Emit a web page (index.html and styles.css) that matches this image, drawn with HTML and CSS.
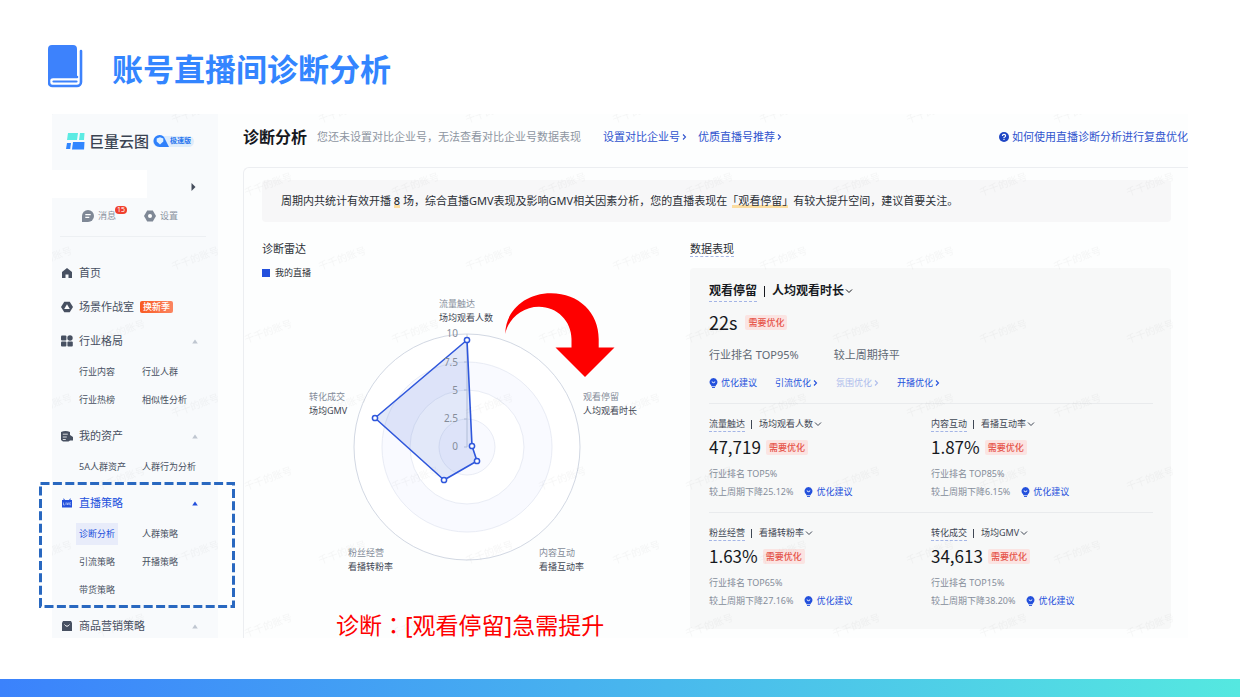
FILE: index.html
```html
<!DOCTYPE html>
<html lang="zh-CN">
<head>
<meta charset="utf-8">
<meta name="viewport" content="width=device-width, initial-scale=1">
<title>账号直播间诊断分析</title>
<link rel="stylesheet" href="styles.css">
</head>
<body>
<svg class="defs" width="0" height="0" aria-hidden="true">
  <symbol id="bulb" viewBox="0 0 8 10"><path d="M4 0a4 4 0 0 0-2.300 7.200V8.200h4.600V7.200A4 4 0 0 0 4 0z" fill="#2350dc"/><path d="M2.300 3.800q1.700 1.800 3.400 0" fill="none" stroke="#fff" stroke-width="1"/><path d="M2.500 9.400h3" stroke="#2350dc" stroke-width="1"/></symbol>
  <symbol id="down" viewBox="0 0 8 8"><path d="M1 2.500l3 3 3-3" fill="none" stroke="currentColor" stroke-width="1"/></symbol>
  <symbol id="right" viewBox="0 0 5 8"><path d="M1 1.500l2.500 2.500L1 6.500" fill="none" stroke="currentColor" stroke-width="1.100"/></symbol>
  <symbol id="fold" viewBox="0 0 6 5"><path d="M3 .5L5.800 4.500H.2z" fill="currentColor"/></symbol>
</svg>

<header class="slide-head">
  <svg class="book" viewBox="0 0 35 43" aria-hidden="true">
    <path d="M4 0h21a4 4 0 0 1 4 4v28H5q-3 0-5 2V4a4 4 0 0 1 4-4z" fill="#3d82fc"/>
    <path d="M33 6v31a4 4 0 0 1-4 4H4.500A3.500 3.500 0 0 1 1 37.500V35q0-3 4-3h24" fill="none" stroke="#3d82fc" stroke-width="2.600" stroke-linecap="round"/>
    <path d="M5.500 36.500h23" stroke="#3d82fc" stroke-width="2.200" stroke-linecap="round"/>
  </svg>
  <h1 class="slide-title">账号直播间诊断分析</h1>
</header>

<section class="board">
  <div class="screen">
    <aside class="sidebar">
      <div class="brand">
        <svg class="brand-mark" viewBox="0 0 19 17" aria-hidden="true">
          <path d="M2 0h10l-1 7H1z" fill="#5cebe3"/><path d="M14 0h4.500l-.5 7h-5z" fill="#5cebe3"/>
          <path d="M1 10h4l-.8 6H0z" fill="#3186ff"/><path d="M7 9h11.500l-.5 7.500H6z" fill="#3186ff"/>
        </svg>
        <span class="brand-name">巨量云图</span>
        <span class="edition">
          <svg class="edition-mark" viewBox="0 0 17 12" aria-hidden="true"><path d="M6.500 0a6 6 0 0 0 0 12H16L12 4A6 6 0 0 0 6.500 0z" fill="#2f80fb"/><path d="M7 2.200l3.300 1.300V6.500L7 9.500 3.700 6.500V3.500z" fill="#dff0ff"/></svg>
          极速版
        </span>
      </div>
      <div class="account">
        <div class="account-name"></div>
        <svg class="account-arrow" viewBox="0 0 5 8" aria-hidden="true"><path d="M.5 0L4.500 4 .5 8z" fill="#454d5c"/></svg>
      </div>
      <div class="tools">
        <a class="tool" href="#msg">
          <svg class="tool-icon" viewBox="0 0 12 12" aria-hidden="true"><path d="M6 0a6 6 0 1 1 0 12H0V6a6 6 0 0 1 6-6z" fill="#7f8896"/><path d="M3.300 4.600h5.400M3.300 7.400h4" stroke="#fff" stroke-width="1.200"/></svg>
          消息<span class="count">15</span>
        </a>
        <a class="tool" href="#set">
          <svg class="tool-icon" viewBox="0 0 12 12" aria-hidden="true"><path d="M3.200.6h5.600L12 6l-3.200 5.400H3.200L0 6z" fill="#7f8896"/><circle cx="6" cy="6" r="2" fill="#fff"/></svg>
          设置
        </a>
      </div>
      <nav class="menu">
        <a class="menu-head" href="#home">
          <svg class="menu-icon" viewBox="0 0 12 12" aria-hidden="true"><path d="M6 1l5 4v6H7.500V7.500h-3V11H1V5z" fill="#475061"/></svg>首页</a>
        <a class="menu-head" href="#war">
          <svg class="menu-icon" viewBox="0 0 12 12" aria-hidden="true"><path d="M3.300.8h5.400L12 6l-3.300 5.200H3.300L0 6z" fill="#475061"/><path d="M6 3.200L8.800 8H3.200z" fill="#fff"/></svg>场景作战室<span class="season">换新季</span></a>
        <div class="menu-group">
          <a class="menu-head" href="#ind">
            <svg class="menu-icon" viewBox="0 0 12 12" aria-hidden="true"><g fill="#475061"><rect x="0" y="0.500" width="5.400" height="5" rx="1"/><circle cx="9" cy="3" r="2.700"/><rect x="0" y="6.500" width="5.400" height="5" rx="1"/><rect x="6.400" y="6.500" width="5.400" height="5" rx="1"/></g></svg>行业格局
            <svg class="fold" aria-hidden="true"><use href="#fold"/></svg></a>
          <div class="submenu"><a href="#a">行业内容</a><a href="#b">行业人群</a><a href="#c">行业热榜</a><a href="#d">相似性分析</a></div>
        </div>
        <div class="menu-group">
          <a class="menu-head" href="#asset">
            <svg class="menu-icon" viewBox="0 0 12 12" aria-hidden="true"><path d="M0 2Q4.500 0 9 2V5l3 2v3.500H9L7.500 11.500H2L0 10z" fill="#475061"/><path d="M1.800 4.200h5M1.800 7h4M1.800 9.500h3" stroke="#fff" stroke-width=".8"/></svg>我的资产
            <svg class="fold" aria-hidden="true"><use href="#fold"/></svg></a>
          <div class="submenu"><a href="#e">5A人群资产</a><a href="#f">人群行为分析</a></div>
        </div>
        <div class="menu-group">
          <a class="menu-head is-open" href="#live">
            <svg class="menu-icon" viewBox="0 0 12 12" aria-hidden="true"><path d="M2.500 1l1.500 2h4l1.500-2v2H11v7.500H1V3h1.500z" fill="#2350dc"/><path d="M2.500 5.500v2.500h1.300M5 5.500V8M6 5.500l.8 2.500.8-2.500M10 5.800H8.700v2H10" fill="none" stroke="#dfe7ff" stroke-width=".6"/></svg>直播策略
            <svg class="fold" aria-hidden="true"><use href="#fold"/></svg></a>
          <div class="submenu"><a class="is-current" href="#g">诊断分析</a><a href="#h">人群策略</a><a href="#i">引流策略</a><a href="#j">开播策略</a><a href="#k">带货策略</a></div>
        </div>
        <a class="menu-head" href="#goods">
          <svg class="menu-icon" viewBox="0 0 12 12" aria-hidden="true"><path d="M2 1h8l1 2v8H1V3z" fill="#475061"/><path d="M3.500 4.500Q6 8 8.500 4.500" fill="none" stroke="#fff" stroke-width="1"/></svg>商品营销策略
          <svg class="fold" aria-hidden="true"><use href="#fold"/></svg></a>
      </nav>
    </aside>

    <main class="main">
      <div class="page-head">
        <h2 class="page-title">诊断分析</h2>
        <span class="page-hint">您还未设置对比企业号，无法查看对比企业号数据表现</span>
        <a class="link" href="#set-rival">设置对比企业号<svg class="go" aria-hidden="true"><use href="#right"/></svg></a>
        <a class="link" href="#top-live">优质直播号推荐<svg class="go" aria-hidden="true"><use href="#right"/></svg></a>
        <a class="link help" href="#help"><svg class="help-icon" viewBox="0 0 10 10" aria-hidden="true"><circle cx="5" cy="5" r="5" fill="#1f46c4"/><path d="M3.400 4Q3.400 2.400 5 2.400T6.600 3.900Q6.600 4.700 5 5.400v.8M5 7v1.100" fill="none" stroke="#fff" stroke-width="1.100"/></svg>如何使用直播诊断分析进行复盘优化</a>
      </div>

      <div class="card">
        <p class="banner">周期内共统计有效开播 <b class="mark">8</b> 场，综合直播GMV表现及影响GMV相关因素分析，您的直播表现在<span class="mark mark-quote">「观看停留」</span>有较大提升空间，建议首要关注。</p>
        <div class="columns">
          <section class="radar">
            <h3 class="section-title">诊断雷达</h3>
            <p class="legend"><i class="legend-key"></i>我的直播</p>
            <svg class="radar-chart" viewBox="0 0 400 300" role="img" aria-label="诊断雷达图">
              <g stroke="#e9ecf5">
                <circle cx="205" cy="157" r="113" fill="#fff" stroke="#d2d8e3"/>
                <circle cx="205" cy="157" r="85" fill="#f9faff"/>
                <circle cx="205" cy="157" r="57" fill="#fff"/>
                <circle cx="205" cy="157" r="28" fill="#f9faff"/>
              </g>
              <path d="M205 44v113M202 72h3M202 100h3M202 129h3M202 157h3" stroke="#c6ccd8" fill="none"/>
              <path d="M205 50L210 156 215 171 182 190 113 128z" fill="#3f62d8" fill-opacity=".15" stroke="#2f57dc" stroke-width="1.600" stroke-linejoin="round"/>
              <g class="radar-scale">
                <text x="196" y="47">10</text><text x="196" y="76">7.5</text><text x="196" y="104">5</text><text x="196" y="132">2.5</text><text x="196" y="160">0</text>
              </g>
              <g fill="#fff" stroke="#2f57dc" stroke-width="1.500">
                <circle cx="205" cy="50" r="2.600"/><circle cx="210" cy="156" r="2.600"/><circle cx="215" cy="171" r="2.600"/><circle cx="182" cy="190" r="2.600"/><circle cx="113" cy="128" r="2.600"/>
              </g>
              <g class="axis-name">
                <text x="177" y="17">流量触达</text><text x="321" y="110">观看停留</text><text x="277" y="266">内容互动</text><text x="86" y="266">粉丝经营</text><text x="47" y="110">转化成交</text>
              </g>
              <g class="axis-metric">
                <text x="177" y="31">场均观看人数</text><text x="321" y="124">人均观看时长</text><text x="277" y="280">看播互动率</text><text x="86" y="280">看播转粉率</text><text x="47" y="124">场均GMV</text>
              </g>
            </svg>
          </section>

          <section class="data">
            <h3 class="section-title"><span class="dotted">数据表现</span></h3>
            <div class="panel">
              <div class="lead">
                <div class="metric-name lead-name"><span class="dotted">观看停留</span><i class="bar"></i>
                  <select class="pick" aria-label="观看停留指标"><option>人均观看时长</option></select><svg class="down" aria-hidden="true"><use href="#down"/></svg></div>
                <div class="metric-value">22s<span class="tag">需要优化</span></div>
                <div class="lead-rank"><span>行业排名 TOP95%</span><span>较上周期持平</span></div>
                <div class="lead-links">
                  <a class="tip" href="#t0"><svg class="bulb" aria-hidden="true"><use href="#bulb"/></svg>优化建议</a>
                  <a class="tip" href="#t1">引流优化<svg class="go" aria-hidden="true"><use href="#right"/></svg></a>
                  <a class="tip is-off" href="#t2">氛围优化<svg class="go" aria-hidden="true"><use href="#right"/></svg></a>
                  <a class="tip" href="#t3">开播优化<svg class="go" aria-hidden="true"><use href="#right"/></svg></a>
                </div>
              </div>
              <div class="metric-row">
                <div class="metric">
                  <div class="metric-name"><span class="dotted">流量触达</span><i class="bar"></i><select class="pick" aria-label="流量触达指标"><option>场均观看人数</option></select><svg class="down" aria-hidden="true"><use href="#down"/></svg></div>
                  <div class="metric-value">47,719<span class="tag">需要优化</span></div>
                  <div class="metric-rank">行业排名 TOP5%</div>
                  <div class="metric-change">较上周期下降25.12%<a class="tip" href="#m1"><svg class="bulb" aria-hidden="true"><use href="#bulb"/></svg>优化建议</a></div>
                </div>
                <div class="metric">
                  <div class="metric-name"><span class="dotted">内容互动</span><i class="bar"></i><select class="pick" aria-label="内容互动指标"><option>看播互动率</option></select><svg class="down" aria-hidden="true"><use href="#down"/></svg></div>
                  <div class="metric-value">1.87%<span class="tag">需要优化</span></div>
                  <div class="metric-rank">行业排名 TOP85%</div>
                  <div class="metric-change">较上周期下降6.15%<a class="tip" href="#m2"><svg class="bulb" aria-hidden="true"><use href="#bulb"/></svg>优化建议</a></div>
                </div>
              </div>
              <div class="metric-row">
                <div class="metric">
                  <div class="metric-name"><span class="dotted">粉丝经营</span><i class="bar"></i><select class="pick" aria-label="粉丝经营指标"><option>看播转粉率</option></select><svg class="down" aria-hidden="true"><use href="#down"/></svg></div>
                  <div class="metric-value">1.63%<span class="tag">需要优化</span></div>
                  <div class="metric-rank">行业排名 TOP65%</div>
                  <div class="metric-change">较上周期下降27.16%<a class="tip" href="#m3"><svg class="bulb" aria-hidden="true"><use href="#bulb"/></svg>优化建议</a></div>
                </div>
                <div class="metric">
                  <div class="metric-name"><span class="dotted">转化成交</span><i class="bar"></i><select class="pick" aria-label="转化成交指标"><option>场均GMV</option></select><svg class="down" aria-hidden="true"><use href="#down"/></svg></div>
                  <div class="metric-value">34,613<span class="tag">需要优化</span></div>
                  <div class="metric-rank">行业排名 TOP15%</div>
                  <div class="metric-change">较上周期下降38.20%<a class="tip" href="#m4"><svg class="bulb" aria-hidden="true"><use href="#bulb"/></svg>优化建议</a></div>
                </div>
              </div>
            </div>
          </section>
        </div>
      </div>
    </main>

    <svg class="watermark" aria-hidden="true">
      <defs><pattern id="wm" width="147" height="147" patternUnits="userSpaceOnUse" x="143" y="-2">
        <text x="73" y="76" transform="rotate(-20 73 72)">千千的账号</text>
        <text x="0" y="3" transform="rotate(-20 0 -1)">千千的账号</text>
        <text x="147" y="3" transform="rotate(-20 147 -1)">千千的账号</text>
        <text x="0" y="150" transform="rotate(-20 0 146)">千千的账号</text>
        <text x="147" y="150" transform="rotate(-20 147 146)">千千的账号</text>
      </pattern></defs>
      <rect width="100%" height="100%" fill="url(#wm)"/>
    </svg>
  </div>

  <svg class="focus-box" viewBox="0 0 196 126" aria-hidden="true"><rect x="1.500" y="1.500" width="193" height="123" fill="none" stroke="#2968c0" stroke-width="3" stroke-dasharray="9 3.400"/></svg>
  <svg class="arrow" viewBox="0 0 110 85" aria-hidden="true"><path d="M.3 41C.3 18 20 .3 46 .3 74 .3 93.700 20 93.700 46V54.500H109.500L80 84 50.500 54.500H66.500V46C66.500 28 52 13.700 34 13.700 17 13.700 3 26 .3 41z" fill="#fe0000"/></svg>
  <p class="verdict">诊断<span class="colon" lang="zh-TW">：</span>[观看停留]急需提升</p>
</section>

<footer class="slide-foot"></footer>
</body>
</html>
```
FILE: styles.css
```css
* { box-sizing: border-box; }

body {
  margin: 0;
  min-height: 100vh;
  display: flex;
  flex-direction: column;
  background: #fff;
  color: #2b2f36;
  font-family: "Noto Sans", "Noto Sans CJK SC", sans-serif;
  font-size: 11px;
  line-height: 16px;
}

h1, h2, h3, p { margin: 0; font-weight: 400; }
a { color: inherit; text-decoration: none; }
svg { display: block; flex: none; }
.defs { position: absolute; }

/* Slide frame */
.slide-head {
  display: flex;
  align-items: center;
  gap: 29px;
  height: 114px;
  padding: 0 48px;
}
.book { width: 35px; height: 43px; margin-bottom: -18px; }
.slide-title {
  padding-top: 22px;
  font: 700 31px/40px "Noto Sans CJK SC", sans-serif;
  color: #3385ff;
}
.board { position: relative; margin: 0 52px; }
.screen {
  position: relative;
  display: flex;
  max-height: 524px;
  overflow: hidden;
}
.slide-foot {
  height: 18px;
  margin-top: auto;
  background: linear-gradient(90deg, #3b82fc, #55e8e0);
}

/* Sidebar */
.sidebar { flex: none; width: 166px; background: #f8fafc; color: #475061; }
.brand {
  display: flex;
  align-items: center;
  height: 56px;
  padding: 0 0 2px 14px;
}
.brand-mark { width: 19px; height: 17px; }
.brand-name {
  margin: 0 4px;
  font: 500 15px/20px "Noto Sans CJK SC", sans-serif;
  color: #3a4352;
}
.edition {
  display: flex;
  align-items: center;
  height: 11px;
  padding-right: 3px;
  border-radius: 6px;
  background: #deecfb;
  color: #2875ee;
  font-size: 7px;
  font-weight: 700;
}
.edition-mark { width: 17px; height: 12px; }
.account { display: flex; align-items: center; gap: 44px; height: 28px; }
.account-name { position: relative; z-index: 1; width: 95px; height: 28px; background: #fff; }
.account-arrow { width: 5px; height: 8px; margin-bottom: -6px; }
.tools {
  display: flex;
  gap: 24px;
  height: 39px;
  margin: 0 12px 0 8px;
  padding: 10px 0 0 22px;
  border-bottom: 1px solid #edf0f3;
  color: #8a929e;
  font-size: 9px;
}
.tool { position: relative; display: flex; align-items: center; gap: 4px; height: 16px; }
.tool-icon { width: 12px; height: 12px; }
.count {
  position: absolute;
  left: 33px;
  top: -2px;
  padding: 0 2px;
  border-radius: 4px;
  background: #f0402e;
  color: #fff;
  font-size: 7px;
  line-height: 8px;
}
.menu { display: flex; flex-direction: column; gap: 4px; padding: 21px 20px 0 9px; }
.menu-head { display: flex; align-items: center; height: 30px; }
.menu-icon { width: 12px; height: 12px; margin-right: 6px; }
.season {
  margin-left: 6px;
  padding: 0 3px;
  border-radius: 2px;
  background: linear-gradient(90deg, #f95a22, #fb8561);
  color: #fff;
  font-size: 9px;
  font-weight: 500;
  line-height: 12px;
}
.fold { width: 6px; height: 5px; margin-left: auto; color: #bfc6d0; }
.menu-head.is-open, .is-open .fold { color: #2350dc; }
.submenu {
  display: grid;
  grid-template-columns: 63px 1fr;
  padding: 2px 0 3px 15px;
  font-size: 9px;
  line-height: 22px;
}
.submenu a { justify-self: start; margin: 3px 0; padding: 0 3px; white-space: nowrap; }
.submenu .is-current { background: #e8ecfa; color: #2350dc; }

/* Main area */
.main { flex: 1; min-width: 0; padding-left: 25px; background: #fdfefe; }
.page-head {
  display: flex;
  align-items: center;
  height: 53px;
  padding-bottom: 8px;
  white-space: nowrap;
}
.page-title { font-size: 16px; font-weight: 700; line-height: 22px; color: #16181d; }
.page-hint { margin: 0 22px 0 10px; color: #8d95a1; }
.link { display: flex; align-items: center; gap: 2px; margin-right: 11px; color: #3054ce; }
.go { width: 5px; height: 8px; }
.help { gap: 3px; margin: 0 0 0 auto; }
.help-icon { width: 10px; height: 10px; }
.card {
  min-height: 471px;
  padding: 12px 17px 9px 18px;
  border: solid #eceef1;
  border-width: 1px 0 0 1px;
  border-radius: 6px 0 0 0;
}
.banner {
  padding: 13px 19px;
  border-radius: 4px;
  background: #f7f7f8;
}
.mark { background: linear-gradient(#fbdc9f, #fbdc9f) 50% 100% / 100% 3px no-repeat; font-weight: 500; }
.mark-quote { background-size: calc(100% - 10px) 3px; font-weight: 400; }
.columns { display: flex; padding-top: 19px; }
.radar { flex: 428; }
.data { flex: 481; }
.section-title { font-size: 11px; line-height: 16px; }
.legend { display: flex; align-items: center; gap: 5px; margin-top: 8px; font-size: 9px; }
.legend-key { width: 8px; height: 8px; background: #2350dc; }
.radar-chart { width: 400px; height: 300px; margin-top: 9px; }
.radar-scale { font-size: 10px; fill: #858d9a; text-anchor: end; }
.axis-name { font-size: 9px; fill: #858d9a; }
.axis-metric { font-size: 9px; fill: #3f4754; }

.dotted { border-bottom: 1px dashed #a4b5e6; }
.panel {
  margin-top: 11px;
  padding: 12px 18px 20px 19px;
  border-radius: 4px;
  background: #f7f8f8;
}
.lead { padding-bottom: 12px; }
.metric-name { display: flex; align-items: center; height: 16px; font-size: 9px; color: #3f4754; }
.metric-name .dotted { line-height: 15px; }
.lead-name { height: 22px; font-size: 12px; font-weight: 700; color: #16181d; }
.lead-name .dotted { line-height: 20px; }
.bar { width: 1px; height: 9px; margin: 0 7px 0 6px; background: currentColor; }
.lead-name .bar { margin: 0 7px; height: 11px; }
.pick {
  appearance: none;
  margin: 0;
  padding: 0;
  border: 0;
  background: none;
  color: inherit;
  font: inherit;
}
.down { width: 8px; height: 8px; }
.metric-value {
  display: flex;
  align-items: center;
  gap: 5px;
  height: 24px;
  margin-top: 3px;
  font: 400 17px/24px "Noto Sans CJK SC", sans-serif;
  color: #16181d;
}
.lead .metric-value { gap: 8px; margin-top: 8px; font-size: 18px; }
.tag {
  padding: 0 3px;
  border-radius: 2px;
  background: #fbe4e2;
  color: #e6544a;
  font-size: 9px;
  font-weight: 500;
  line-height: 15px;
}
.lead-rank { display: flex; gap: 35px; margin-top: 13px; color: #5f6874; }
.lead-links { display: flex; gap: 18px; margin-top: 12px; }
.tip { display: flex; align-items: center; gap: 2px; color: #2350dc; font-size: 9px; }
.tip.is-off { color: #aebcec; }
.bulb { width: 9px; height: 10px; margin-right: 1px; }
.metric-row {
  display: grid;
  grid-template-columns: 1fr 1fr;
  padding: 12px 0;
  border-top: 1px solid #e9ebed;
}
.metric-row:last-child { padding-bottom: 0; }
.metric-rank, .metric-change { font-size: 9px; color: #858d9a; }
.metric-rank { margin-top: 7px; }
.metric-change { display: flex; gap: 11px; margin-top: 2px; }

/* Layers over the screen */
.watermark {
  position: absolute;
  inset: 0;
  width: 100%;
  height: 100%;
  pointer-events: none;
}
.watermark text { font-size: 10px; fill: #000; fill-opacity: .035; text-anchor: middle; }
.focus-box { position: absolute; left: -13px; top: 368px; width: 196px; height: 126px; }
.arrow { position: absolute; left: 453px; top: 179px; width: 110px; height: 85px; }
.verdict {
  position: absolute;
  left: 284px;
  top: 494px;
  color: #fe0000;
  font-size: 23px;
  line-height: 32px;
  white-space: nowrap;
}
.colon { font-family: "Noto Sans CJK TC", sans-serif; }
```
